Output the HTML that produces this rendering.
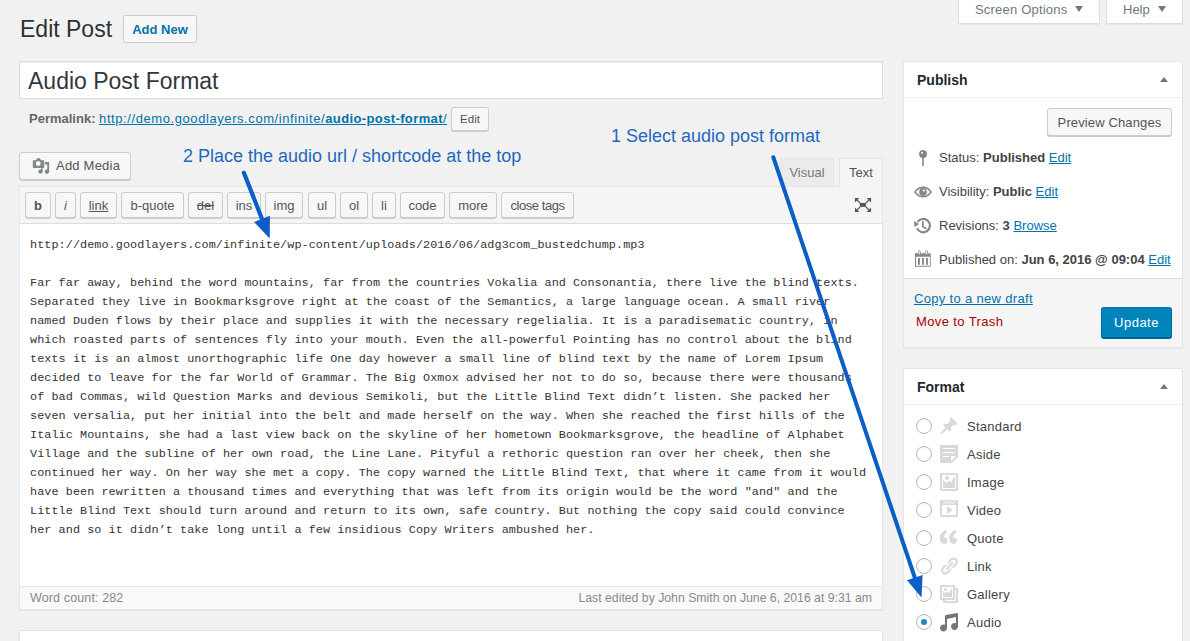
<!DOCTYPE html>
<html><head><meta charset="utf-8">
<style>
*{box-sizing:border-box;margin:0;padding:0}
html,body{width:1190px;height:641px;overflow:hidden;background:#f1f1f1;font-family:"Liberation Sans",sans-serif;color:#444;font-size:13px;position:relative}
.a{position:absolute;white-space:nowrap}
.btn{position:absolute;background:#f7f7f7;border:1px solid #ccc;border-radius:3px;box-shadow:0 1px 0 #ccc;color:#555;font-size:13px;text-align:center}
.box{position:absolute;background:#fff;border:1px solid #e5e5e5;box-shadow:0 1px 1px rgba(0,0,0,.04)}
a,.lnk{color:#0073aa;text-decoration:underline}
.tri-up{position:absolute;width:0;height:0;border-left:4px solid transparent;border-right:4px solid transparent;border-bottom:5px solid #72777c}
.tri-dn{position:absolute;width:0;height:0;border-left:4px solid transparent;border-right:4px solid transparent;border-top:6px solid #72777c}
.qt{position:absolute;top:192px;height:26px;background:#f7f7f7;border:1px solid #ccc;border-radius:3px;box-shadow:0 1px 0 #ccc;color:#555;font-size:13px;line-height:26px;text-align:center}
.mono{white-space:pre !important;font-family:"Liberation Mono",monospace;font-size:11.8px;letter-spacing:0.067px;color:#333;line-height:19px}
.radio{position:absolute;left:916px;width:16px;height:16px;border:1px solid #b4b9be;border-radius:50%;background:#fff;box-shadow:inset 0 1px 2px rgba(0,0,0,.07)}
.fl{position:absolute;left:967px;font-size:13px;color:#444;letter-spacing:.25px}
.ann{position:absolute;font-size:18px;color:#1f68bd;white-space:nowrap}
</style></head><body>

<!-- screen options tabs -->
<div class="a" style="left:958px;top:-1px;width:142px;height:25px;background:#fff;border:1px solid #ddd;border-top:none;box-shadow:0 1px 1px rgba(0,0,0,.04)"></div>
<div class="a" style="left:975px;top:1px;font-size:13px;color:#72777c;line-height:17px;letter-spacing:.2px">Screen Options</div>
<div class="tri-dn" style="left:1075px;top:6px"></div>
<div class="a" style="left:1106px;top:-1px;width:77px;height:25px;background:#fff;border:1px solid #ddd;border-top:none;box-shadow:0 1px 1px rgba(0,0,0,.04)"></div>
<div class="a" style="left:1123px;top:1px;font-size:13px;color:#72777c;line-height:17px">Help</div>
<div class="tri-dn" style="left:1158px;top:6px"></div>

<!-- heading -->
<div class="a" style="left:20px;top:15px;font-size:23px;color:#2c3136;line-height:28px">Edit Post</div>
<div class="a" style="left:123px;top:15px;width:74px;height:28px;border:1px solid #ccc;border-radius:2px;background:#f7f7f7;color:#0073aa;font-weight:bold;font-size:13px;line-height:28px;text-align:center">Add New</div>

<!-- title -->
<div class="a" style="left:19px;top:61px;width:864px;height:38px;background:#fff;border:1px solid #ddd;box-shadow:inset 0 1px 2px rgba(0,0,0,.07)"></div>
<div class="a" style="left:28px;top:67px;font-size:23px;color:#32373c;line-height:28px">Audio Post Format</div>

<!-- permalink -->
<div class="a" style="left:29px;top:111px;font-size:13px;color:#666;line-height:16px"><b>Permalink:</b> <span class="lnk" style="letter-spacing:.58px">http://demo.goodlayers.com/infinite/<b style="letter-spacing:.38px">audio-post-format</b>/</span></div>
<div class="btn" style="left:451px;top:107px;width:38px;height:24px;font-size:11.5px;line-height:23px">Edit</div>

<!-- add media -->
<div class="btn" style="left:19px;top:152px;width:112px;height:28px;line-height:26px"></div>
<div class="a" style="left:56px;top:158px;font-size:13px;color:#555;line-height:16px;letter-spacing:.22px">Add Media</div>

<!-- editor container -->
<div class="a" style="left:19px;top:186px;width:864px;height:424px;background:#fff;border:1px solid #e5e5e5"></div>
<div class="a" style="left:20px;top:187px;width:862px;height:37px;background:#f5f5f5;border-bottom:1px solid #ddd"></div>

<!-- tabs -->
<div class="a" style="left:780px;top:158px;width:54px;height:29px;background:#ebebeb;border:1px solid #e5e5e5;color:#777;font-size:13px;line-height:28px;text-align:center">Visual</div>
<div class="a" style="left:839px;top:158px;width:44px;height:29px;background:#f5f5f5;border:1px solid #e5e5e5;border-bottom:none;color:#555;font-size:13px;line-height:28px;text-align:center">Text</div>

<!-- quicktags -->
<div class="qt" style="left:25px;width:26px;font-weight:bold">b</div>
<div class="qt" style="left:55px;width:21px;font-style:italic">i</div>
<div class="qt" style="left:80px;width:37px;text-decoration:underline">link</div>
<div class="qt" style="left:121px;width:63px">b-quote</div>
<div class="qt" style="left:188px;width:35px;text-decoration:line-through">del</div>
<div class="qt" style="left:227px;width:34px">ins</div>
<div class="qt" style="left:265px;width:38px">img</div>
<div class="qt" style="left:308px;width:28px">ul</div>
<div class="qt" style="left:340px;width:28px">ol</div>
<div class="qt" style="left:372px;width:24px">li</div>
<div class="qt" style="left:400px;width:45px">code</div>
<div class="qt" style="left:449px;width:48px">more</div>
<div class="qt" style="left:501px;width:73px;letter-spacing:-.45px">close tags</div>

<!-- fullscreen icon -->
<svg class="a" style="left:850px;top:192px" width="26" height="26" viewBox="0 0 26 26"><g fill="#50575e" stroke="#50575e">
<rect x="9.9" y="11" width="6" height="3.9" stroke="none"/>
<path stroke="none" d="M4.9 6.1H9.4L4.9 10.6zM21.1 6.1H16.6L21.1 10.6zM4.9 19.9H9.4L4.9 15.4zM21.1 19.9H16.6L21.1 15.4z"/>
<path fill="none" stroke-width="1.2" d="M7 8L10.4 11.4M19 8L15.6 11.4M7 18L10.4 14.6M19 18L15.6 14.6"/>
</g></svg>

<!-- content -->
<pre class="a mono" style="left:30px;top:236px">http://demo.goodlayers.com/infinite/wp-content/uploads/2016/06/adg3com_bustedchump.mp3

Far far away, behind the word mountains, far from the countries Vokalia and Consonantia, there live the blind texts.
Separated they live in Bookmarksgrove right at the coast of the Semantics, a large language ocean. A small river
named Duden flows by their place and supplies it with the necessary regelialia. It is a paradisematic country, in
which roasted parts of sentences fly into your mouth. Even the all-powerful Pointing has no control about the blind
texts it is an almost unorthographic life One day however a small line of blind text by the name of Lorem Ipsum
decided to leave for the far World of Grammar. The Big Oxmox advised her not to do so, because there were thousands
of bad Commas, wild Question Marks and devious Semikoli, but the Little Blind Text didn’t listen. She packed her
seven versalia, put her initial into the belt and made herself on the way. When she reached the first hills of the
Italic Mountains, she had a last view back on the skyline of her hometown Bookmarksgrove, the headline of Alphabet
Village and the subline of her own road, the Line Lane. Pityful a rethoric question ran over her cheek, then she
continued her way. On her way she met a copy. The copy warned the Little Blind Text, that where it came from it would
have been rewritten a thousand times and everything that was left from its origin would be the word "and" and the
Little Blind Text should turn around and return to its own, safe country. But nothing the copy said could convince
her and so it didn’t take long until a few insidious Copy Writers ambushed her.</pre>

<!-- status bar -->
<div class="a" style="left:19px;top:586px;width:864px;height:24px;background:#f9f9f9;border:1px solid #e5e5e5;box-shadow:0 1px 1px rgba(0,0,0,.04)"></div>
<div class="a" style="left:30px;top:591px;font-size:12.5px;color:#858a8f;line-height:15px;letter-spacing:.13px">Word count: 282</div>
<div class="a" style="right:318px;top:591px;font-size:12.25px;color:#858a8f;line-height:15px">Last edited by John Smith on June 6, 2016 at 9:31 am</div>

<!-- below postbox -->
<div class="box" style="left:19px;top:630px;width:864px;height:30px"></div>

<!-- publish box -->
<div class="box" style="left:903px;top:61px;width:280px;height:287px"></div>
<div class="a" style="left:904px;top:97px;width:278px;height:1px;background:#eee"></div>
<div class="a" style="left:917px;top:72px;font-size:14px;font-weight:bold;color:#23282d;line-height:16px">Publish</div>
<div class="tri-up" style="left:1160px;top:77px"></div>
<div class="btn" style="left:1047px;top:108px;width:125px;height:28px;line-height:28px;letter-spacing:.13px">Preview Changes</div>

<div class="a" style="left:939px;top:150px;font-size:13px;color:#444;line-height:16px">Status: <b>Published</b> <span class="lnk">Edit</span></div>
<div class="a" style="left:939px;top:184px;font-size:13px;color:#444;line-height:16px">Visibility: <b>Public</b> <span class="lnk">Edit</span></div>
<div class="a" style="left:939px;top:218px;font-size:13px;color:#444;line-height:16px">Revisions: <b>3</b> <span class="lnk">Browse</span></div>
<div class="a" style="left:939px;top:252px;font-size:13px;color:#444;line-height:16px">Published on: <b>Jun 6, 2016 @ 09:04</b> <span class="lnk">Edit</span></div>

<div class="a" style="left:904px;top:278px;width:278px;height:69px;background:#f5f5f5;border-top:1px solid #ddd"></div>
<div class="a" style="left:914px;top:291px;font-size:13px;line-height:16px" ><span class="lnk" style="letter-spacing:.32px">Copy to a new draft</span></div>
<div class="a" style="left:916px;top:314px;font-size:13px;color:#a00;line-height:16px;letter-spacing:.38px">Move to Trash</div>
<div class="a" style="left:1101px;top:307px;width:71px;height:31px;background:#0085ba;border:1px solid #0073aa;border-color:#0073aa #006799 #006799;border-radius:3px;box-shadow:0 1px 0 #006799;color:#fff;font-size:13px;line-height:29px;text-align:center;letter-spacing:.5px">Update</div>

<!-- format box -->
<div class="box" style="left:903px;top:368px;width:280px;height:300px"></div>
<div class="a" style="left:904px;top:404px;width:278px;height:1px;background:#eee"></div>
<div class="a" style="left:917px;top:379px;font-size:14px;font-weight:bold;color:#23282d;line-height:16px">Format</div>
<div class="tri-up" style="left:1160px;top:384px"></div>

<div class="radio" style="top:418px"></div><div class="fl" style="top:419px">Standard</div>
<div class="radio" style="top:446px"></div><div class="fl" style="top:447px">Aside</div>
<div class="radio" style="top:474px"></div><div class="fl" style="top:475px">Image</div>
<div class="radio" style="top:502px"></div><div class="fl" style="top:503px">Video</div>
<div class="radio" style="top:530px"></div><div class="fl" style="top:531px">Quote</div>
<div class="radio" style="top:558px"></div><div class="fl" style="top:559px">Link</div>
<div class="radio" style="top:586px"></div><div class="fl" style="top:587px">Gallery</div>
<div class="radio" style="top:614px"><div style="position:absolute;left:4px;top:4px;width:6px;height:6px;border-radius:50%;background:#1e8cbe"></div></div><div class="fl" style="top:615px">Audio</div>


<!-- icons -->
<svg class="a" style="left:28px;top:154px" width="28" height="24" viewBox="0 0 28 24"><g fill="#82878c">
<path fill-rule="evenodd" d="M5.5 6.2h2.6l1-2h2.8l1 2h2.6c.4 0 .7.3.7.7v6.4c0 .4-.3.7-.7.7H5.5c-.4 0-.7-.3-.7-.7V6.9c0-.4.3-.7.7-.7zM10.2 7.1a2.4 2.4 0 1 0 0.01 0z"/>
<path d="M16.9 8.1h4.2v9.6c0 1.2-1 2.1-2.2 2.1s-2.1-.9-2.1-2.1.9-2.1 2.1-2.1c.2 0 .3 0 .4.1V10.4h-2.4z"/>
<path d="M13 15.2V14.2h1.7v3.4c0 1.2-1 2.1-2.2 2.1s-2.1-.9-2.1-2.1.9-2.1 2.1-2.1c.2 0 .4 0 .5.1z"/>
</g></svg>

<svg class="a" style="left:913px;top:148px" width="20" height="20" viewBox="0 0 20 20"><g fill="#82878c">
<circle cx="10" cy="6" r="3.9"/><rect x="9.2" y="8" width="1.6" height="10" rx=".6"/><circle cx="9.1" cy="4.8" r="1" fill="#fff"/>
</g></svg>
<svg class="a" style="left:913px;top:182px" width="20" height="20" viewBox="0 0 20 20"><g fill="#82878c">
<path d="M10 4.6c-3.9 0-7.2 2.2-8.9 5.4 1.7 3.2 5 5.4 8.9 5.4s7.2-2.2 8.9-5.4C17.2 6.8 13.9 4.6 10 4.6zm0 9.2c-3 0-5.6-1.5-7.1-3.8C4.4 7.7 7 6.2 10 6.2s5.6 1.5 7.1 3.8c-1.5 2.3-4.1 3.8-7.1 3.8z"/>
<circle cx="10" cy="9.9" r="3.8"/><circle cx="10.8" cy="8.6" r="1.1" fill="#fff"/>
</g></svg>
<svg class="a" style="left:913px;top:216px" width="20" height="20" viewBox="0 0 20 20"><g fill="#82878c" stroke="#82878c">
<path d="M4.52 6.05A6.7 6.7 0 1 1 3.99 12.11" fill="none" stroke-width="2.1"/>
<path d="M0.9 5.1L1.5 10.9L6 7.9z" stroke="none"/>
<path d="M9.85 5.3V10.6L13.4 12.8" fill="none" stroke-width="1.7"/>
</g></svg>
<svg class="a" style="left:913px;top:249px" width="20" height="20" viewBox="0 0 20 20"><g fill="#82878c">
<path fill-rule="evenodd" d="M2 4.2h15.7v13.5H2zM3.1 7.7v9.1h13.8V7.7z"/>
<rect x="5.6" y="1.6" width="1.8" height="4.2" rx=".9" fill="#fff" stroke="#82878c" stroke-width=".8"/>
<rect x="12.6" y="1.6" width="1.8" height="4.2" rx=".9" fill="#fff" stroke="#82878c" stroke-width=".8"/>
<rect x="5" y="9" width="1.9" height="6.8"/><rect x="9" y="9" width="1.9" height="6.8"/><rect x="13" y="9" width="1.9" height="6.8"/>
</g></svg>

<svg class="a" style="left:939px;top:416px" width="20" height="20" viewBox="0 0 20 20"><path fill="#d9d9d9" d="M10.44 3.02l1.82-1.82 6.36 6.35-1.83 1.82c-1.05-.68-2.48-.57-3.41.36l-.75.75c-.93.93-1.04 2.35-.35 3.41l-1.83 1.82-2.41-2.41-2.8 2.79c-.42.42-3.38 2.71-3.8 2.29s1.86-3.39 2.28-3.81l2.79-2.79L4.1 9.36l1.83-1.82c1.05.69 2.48.57 3.4-.36l.75-.75c.93-.92 1.05-2.35.36-3.41z"/></svg>
<svg class="a" style="left:939px;top:444px" width="20" height="20" viewBox="0 0 20 20"><path fill="#d9d9d9" d="M1 1h18v12l-6 6H1V1zm3 3v1h12V4H4zm0 4v1h12V8H4zm6 5v-1H4v1h6zm2 4l5-5h-5v5z"/></svg>
<svg class="a" style="left:939px;top:472px" width="20" height="20" viewBox="0 0 20 20"><path fill="#d9d9d9" d="M2.25 1h15.5c.69 0 1.250.56 1.25 1.25v15.5c0 .69-.56 1.25-1.25 1.25H2.25C1.560 19 1 18.44 1 17.75V2.25C1 1.56 1.56 1 2.25 1zM17 17V3H3v14h14zM10 6c0-1.1-.9-2-2-2s-2 .9-2 2 .9 2 2 2 2-.9 2-2zm3 5s0-6 3-6v10c0 .55-.45 1-1 1H5c-.55 0-1-.45-1-1V8c2 0 3 4 3 4s1-3 3-3 3 2 3 2z"/></svg>
<svg class="a" style="left:939px;top:499px" width="20" height="20" viewBox="0 0 20 20"><path fill="#d9d9d9" d="M2 1h16c.55 0 1 .45 1 1v16l-18-.02V2c0-.55.45-1 1-1zm4 1L4 5h1l2-3H6zm4 0H9L7 5h1zm3 0h-1l-2 3h1zm3 0h-1l-2 3h1zm1 14V6H3v10h14zM8 7l6 4-6 4V7z"/></svg>
<svg class="a" style="left:939px;top:528px" width="20" height="20" viewBox="0 0 20 20"><path fill="#d9d9d9" d="M8.54 12.74c0-.87-.24-1.610-.72-2.220-.73-.92-2.140-1.03-2.960-.85-.34-1.93 1.3-4.39 3.42-5.45L6.650 1.94C3.450 3.46.31 6.96.85 11.370 1.190 14.16 2.8 16 5.080 16c1 0 1.830-.29 2.480-.88.66-.59.98-1.38.98-2.38zm9.430 0c0-.87-.24-1.61-.72-2.22-.73-.92-2.14-1.03-2.96-.85-.34-1.93 1.3-4.39 3.42-5.45l-1.63-2.28c-3.2 1.52-6.34 5.02-5.8 9.43.34 2.79 1.95 4.63 4.23 4.63 1 0 1.83-.29 2.48-.88.66-.59.98-1.38.98-2.38z"/></svg>
<svg class="a" style="left:939px;top:556px" width="20" height="20" viewBox="0 0 20 20"><path fill="#d9d9d9" d="M17.74 2.76c1.68 1.69 1.68 4.41 0 6.1l-1.53 1.52c-1.12 1.12-2.7 1.47-4.14 1.09l2.62-2.610.76-.770.76-.76c.84-.84.84-2.2 0-3.04-.84-.85-2.2-.85-3.04 0l-.77.76-3.38 3.38c-.37-1.44-.02-3.02 1.1-4.14l1.52-1.53c1.69-1.68 4.42-1.68 6.1 0zM8.59 13.43l5.34-5.34c.42-.42.42-1.1 0-1.52-.44-.43-1.13-.39-1.53 0l-5.33 5.34c-.42.42-.42 1.1 0 1.52.44.43 1.13.39 1.52 0zm-.76 2.29l4.14-4.15c.38 1.44.03 3.02-1.09 4.14l-1.52 1.53c-1.69 1.68-4.41 1.68-6.1 0-1.68-1.68-1.68-4.42 0-6.1l1.53-1.52c1.12-1.12 2.7-1.47 4.14-1.1l-4.14 4.15c-.85.84-.85 2.2 0 3.05.84.84 2.2.84 3.04 0z"/></svg>
<svg class="a" style="left:939px;top:584px" width="20" height="20" viewBox="0 0 20 20"><path fill="#d9d9d9" d="M16 4h1.96c.57 0 1.04.47 1.04 1.04v12.92c0 .57-.47 1.04-1.04 1.04H5.04C4.47 19 4 18.53 4 17.96V16H2.04C1.47 16 1 15.53 1 14.96V2.04C1 1.47 1.47 1 2.04 1h12.92c.57 0 1.04.47 1.04 1.04V4zM3 14h11V3H3v11zm5-8.5C8 4.67 7.33 4 6.5 4S5 4.67 5 5.5 5.67 7 6.5 7 8 6.33 8 5.5zm2 4.5s1-5 3-5v8H4V7c2 0 2 3 2 3s.33-2 2-2 2 2 2 2zm7 7V6h-1v8.96c0 .57-.47 1.04-1.04 1.04H6v1h11z"/></svg>
<svg class="a" style="left:939px;top:612px" width="20" height="20" viewBox="0 0 20 20"><path fill="#72777c" d="M6.99 3.08l11.02-2c.55-.08.99.45.99 1V14.5c0 1.94-1.57 3.5-3.5 3.5S12 16.44 12 14.5c0-1.93 1.57-3.5 3.5-3.5.54 0 1.04.14 1.5.35V5.08l-9 2V16c-.01 1.93-1.58 3.5-3.5 3.5S1 17.93 1 16c0-1.94 1.570-3.5 3.5-3.5.54 0 1.04.14 1.5.35V4.08c0-.55.44-.91.99-1z"/></svg>

<!-- annotations -->
<div class="ann" style="left:183px;top:146px">2 Place the audio url / shortcode at the top</div>
<div class="ann" style="left:611px;top:126px">1 Select audio post format</div>

<svg class="a arrows" style="left:0;top:0" width="1190" height="641">
<g fill="#0a5ec6" stroke="#0a5ec6">
<line x1="243.9" y1="172.8" x2="262.4" y2="219.9" stroke-width="4.2" stroke-linecap="round"/>
<path d="M254.1 222.1L269.9 215.8L269.7 238.5Z" stroke="none"/>
<line x1="773.3" y1="157.2" x2="915.1" y2="578.5" stroke-width="4.0" stroke-linecap="round"/>
<path d="M907.0 580.2L922.6 575.0L921.5 597.5Z" stroke="none"/>
</g>
</svg>

</body></html>
